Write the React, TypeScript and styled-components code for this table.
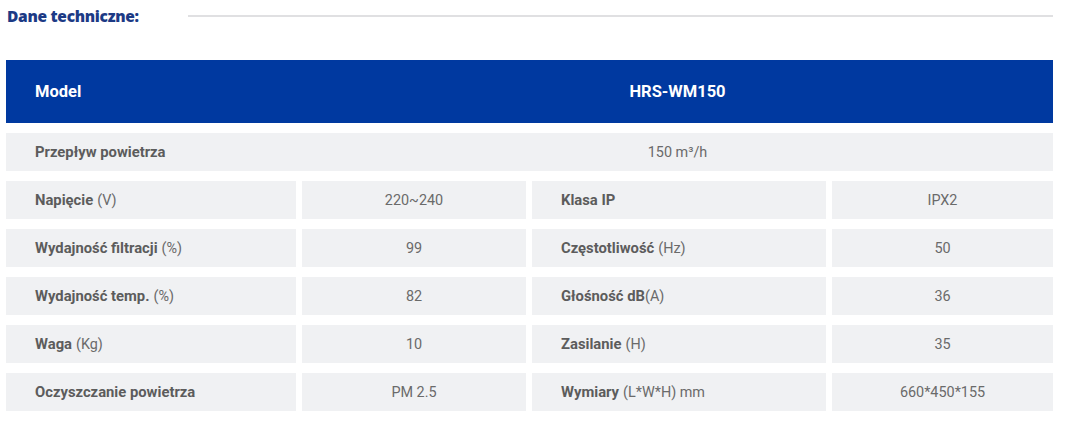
import styled, { createGlobalStyle } from "styled-components";

const GlobalStyle = createGlobalStyle`
  body {
    margin: 0;
    background: #ffffff;
    font-family: Roboto, "Liberation Sans", sans-serif;
  }
`;

const Page = styled.div`
  width: 1047px;
  padding: 0 0 0 6px;
`;

const TitleBar = styled.div`
  display: flex;
  align-items: center;
  height: 32px;
  margin-bottom: 28px;
`;

const Title = styled.h3`
  margin: 0 0 0 1px;
  width: 181px;
  font-family: "Open Sans", "Liberation Sans", sans-serif;
  font-size: 15.5px;
  font-weight: 800;
  letter-spacing: -0.3px;
  color: #1c3a85;
`;

const Rule = styled.div`
  flex: 1;
  height: 2px;
  background: #e0e0e2;
`;

const Table = styled.div`
  display: flex;
  flex-direction: column;
  gap: 10px;
`;

const Row = styled.div<{ $head?: boolean; $full?: boolean }>`
  display: grid;
  grid-template-columns: 290px 224px 294px 221px;
  column-gap: 6px;
  height: ${(p) => (p.$head ? "63px" : "38px")};
  background: ${(p) => (p.$head ? "#0039a0" : p.$full ? "#f0f1f3" : "transparent")};
`;

const Cell = styled.div<{ $center?: boolean; $span?: boolean; $head?: boolean }>`
  display: flex;
  align-items: center;
  justify-content: ${(p) => (p.$center ? "center" : "flex-start")};
  padding-left: ${(p) => (p.$center ? "0" : "29px")};
  grid-column: ${(p) => (p.$span ? "2 / 5" : "auto")};
  background: ${(p) => (p.$head ? "transparent" : "#f0f1f3")};
  font-size: ${(p) => (p.$head ? "16.5px" : "14.4px")};
  font-weight: ${(p) => (p.$head ? 700 : 400)};
  color: ${(p) => (p.$head ? "#ffffff" : "#6a6a6a")};
`;

const Bold = styled.b<{ $gap?: boolean }>`
  font-weight: 700;
  font-size: 14.8px;
  color: #5c5c5c;
  margin-right: ${(p) => (p.$gap ? "4px" : "0")};
`;

type Pair = [string, string, string];

const rows: [Pair, Pair][] = [
  [["Napięcie", "(V)", "220~240"], ["Klasa IP", "", "IPX2"]],
  [["Wydajność filtracji", "(%)", "99"], ["Częstotliwość", "(Hz)", "50"]],
  [["Wydajność temp.", "(%)", "82"], ["Głośność dB", "(A)", "36"]],
  [["Waga", "(Kg)", "10"], ["Zasilanie", "(H)", "35"]],
  [["Oczyszczanie powietrza", "", "PM 2.5"], ["Wymiary", "(L*W*H) mm", "660*450*155"]],
];

const Label = ({ name, unit }: { name: string; unit: string }) => (
  <Cell>
    <Bold $gap={!!unit && !name.endsWith("dB")}>{name}</Bold>
    {unit}
  </Cell>
);

export default function App() {
  return (
    <Page>
      <GlobalStyle />
      <TitleBar>
        <Title>Dane techniczne:</Title>
        <Rule />
      </TitleBar>
      <Table>
        <Row $head>
          <Cell $head>Model</Cell>
          <Cell $head $center $span>
            HRS-WM150
          </Cell>
        </Row>
        <Row $full>
          <Cell>
            <Bold>Przepływ powietrza</Bold>
          </Cell>
          <Cell $center $span>
            150 m³/h
          </Cell>
        </Row>
        {rows.map(([a, b]) => (
          <Row key={a[0]}>
            <Label name={a[0]} unit={a[1]} />
            <Cell $center>{a[2]}</Cell>
            <Label name={b[0]} unit={b[1]} />
            <Cell $center>{b[2]}</Cell>
          </Row>
        ))}
      </Table>
    </Page>
  );
}
